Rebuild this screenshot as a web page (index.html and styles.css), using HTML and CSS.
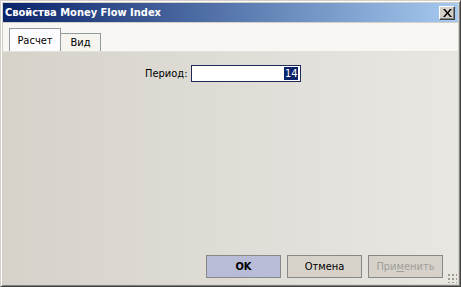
FILE: index.html
```html
<!DOCTYPE html>
<html>
<head>
<meta charset="utf-8">
<link rel="stylesheet" href="styles.css">
</head>
<body>
<div class="window">
  <div class="titlebar">
    <span class="title">Свойства Money Flow Index</span>
    <span class="close"><svg width="9" height="8" viewBox="0 0 9 8"><path d="M0 0h2l2.5 3 2.5-3h2L5.5 4 9 8H7L4.5 5 2 8H0l3.5-4z" fill="#000"/></svg></span>
  </div>
  <div class="tabstrip">
    <div class="tab active">Расчет</div>
    <div class="tab">Вид</div>
  </div>
  <div class="panel">
    <div class="row">
      <label class="label">Период:</label>
      <div class="input"><span class="sel">14</span></div>
    </div>
    <div class="buttons">
      <div class="btn default">OK</div>
      <div class="btn">Отмена</div>
      <div class="btn disabled">При<u>м</u>енить</div>
      <div class="grip"></div>
    </div>
  </div>
</div>
</body>
</html>
```
FILE: styles.css
```css
html, body { margin: 0; padding: 0; }
body { width: 461px; height: 287px; overflow: hidden; font-family: "DejaVu Sans Condensed", "DejaVu Sans", sans-serif; font-size: 11px; }
.window {
  width: 461px; height: 287px; box-sizing: border-box;
  border-top: 1px solid #d4d0c8; border-left: 1px solid #d4d0c8;
  border-right: 1px solid #404040; border-bottom: 1px solid #404040;
  box-shadow: inset 1px 1px 0 #fff, inset -1px -1px 0 #808080;
  padding: 2px;
  background: #d4d0c8;
  display: flex; flex-direction: column;
}
.titlebar {
  height: 19px; flex: none;
  background: linear-gradient(to right, #0a246a, #a6caf0);
  display: flex; align-items: center; justify-content: space-between;
  padding: 0 3px 0 2px;
}
.title { color: #fff; font-weight: bold; font-size: 11px; letter-spacing: 0; }
.close {
  width: 16px; height: 14px; box-sizing: border-box;
  background: #d4d0c8;
  border-top: 1px solid #fff; border-left: 1px solid #fff;
  border-right: 1px solid #404040; border-bottom: 1px solid #404040;
  box-shadow: inset -1px -1px 0 #808080;
  display: flex; align-items: center; justify-content: center;
}
.tabstrip {
  height: 28px; flex: none; background: #f8f7f4;
  display: flex; align-items: flex-end; padding-left: 6px;
  border-bottom: 1px solid #e4e2dc;
  margin-top: 1px;
}
.tab {
  height: 18px; width: 40px; box-sizing: border-box;
  border: 1px solid #919b9c; border-bottom: none;
  background: #f5f4ef; color: #000;
  display: flex; align-items: center; justify-content: center;
}
.tab.active { height: 23px; width: 52px; background: #fcfcfe; border-color: #919b9c; }
.tab + .tab { border-left: none; }
.panel {
  flex: 1; background: linear-gradient(to right, #d6d2ca, #e8e7e2);
  display: flex; flex-direction: column; justify-content: space-between;
  position: relative;
}
.row { display: flex; align-items: center; padding-top: 13px; padding-left: 142px; gap: 4px; }
.label { color: #000; }
.input {
  width: 110px; height: 17px; box-sizing: border-box;
  border: 1px solid #1c2a55; background: #fff;
  display: flex; justify-content: flex-end; align-items: center; padding-right: 2px;
}
.sel { background: #0a246a; color: #fff; padding: 0 1px; line-height: 13px; }
.buttons { display: flex; justify-content: flex-end; gap: 6px; padding: 0 15px 6px 0; }
.btn {
  width: 75px; height: 23px; box-sizing: border-box;
  border: 1px solid #888; background: #d6d2ca;
  display: flex; align-items: center; justify-content: center; color: #000;
}
.btn.default { background: #b9bcd6; font-weight: bold; }
.btn.disabled { color: #a19e98; }
.btn.disabled u { text-decoration: underline; }
.grip {
  position: absolute; right: 1px; bottom: 1px; width: 10px; height: 10px;
  background-image: radial-gradient(circle, #a09c94 1px, transparent 1.2px);
  background-size: 4px 4px;
}
```
